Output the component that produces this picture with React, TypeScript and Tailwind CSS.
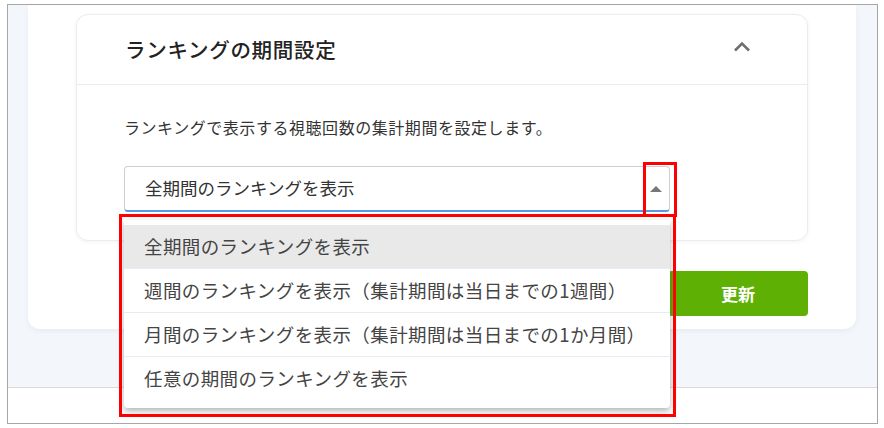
const options = [
  "全期間のランキングを表示",
  "週間のランキングを表示（集計期間は当日までの1週間）",
  "月間のランキングを表示（集計期間は当日までの1か月間）",
  "任意の期間のランキングを表示",
]

const App = () => {
  return (
    <div
      lang="ja"
      className="relative w-[884px] h-[428px] bg-white pt-[4px] pl-[7px] [text-spacing-trim:space-all]"
      style={{ fontFamily: '"Noto Sans CJK JP", "Noto Sans", sans-serif' }}
    >
      {/* FRAME */}
      <div className="w-[871px] h-[420px] border border-[#a6a6a6] bg-[#f3f6fa] flex flex-col">
        {/* MAIN */}
        <div className="h-[382px] pl-[20px] pr-[21px]">
          <div className="h-[324px] bg-white rounded-b-[12px] shadow-[0_2px_6px_rgba(0,0,0,0.05)] pt-[9px] px-[48px]">
            {/* CARD */}
            <div className="h-[227px] border border-[#ececec] rounded-[12px] shadow-[0_1px_4px_rgba(0,0,0,0.05)] bg-white flex flex-col">
              <div className="h-[70px] border-b border-[#ebebeb] flex items-center justify-between pl-[48px] pr-[56px]">
                <h2 className="text-[20.5px] font-medium text-[#222] tracking-[0.7px]">ランキングの期間設定</h2>
                <svg width="18" height="11" viewBox="0 0 18 11" className="mb-[6px]">
                  <path d="M2 9.5 L9 2.5 L16 9.5" fill="none" stroke="#6f6f6f" strokeWidth="2.6" />
                </svg>
              </div>
              <div className="px-[47px] pt-[30px]">
                <p className="text-[16px] leading-[24px] text-[#333] tracking-[0.55px]">
                  ランキングで表示する視聴回数の集計期間を設定します。
                </p>
                {/* SELECT */}
                <div className="relative mt-[27px] w-[546px]">
                  <div className="h-[46px] border border-[#cfcfcf] border-b-2 border-b-[#5b95e8] rounded-[4px] flex items-center justify-between pl-[20px] pr-[7px]">
                    <span className="text-[17.5px] text-[#333]">全期間のランキングを表示</span>
                    <svg width="12" height="6" viewBox="0 0 12 6">
                      <path d="M0 6 L6 0 L12 6 Z" fill="#777" />
                    </svg>
                  </div>
                  {/* DROPDOWN */}
                  <div className="absolute left-0 top-[54px] w-[546px] z-10 bg-white rounded-b-[4px] shadow-[0_3px_6px_rgba(0,0,0,0.3)] pt-[5px] pb-[7px]">
                    {options.map((o, i) => (
                      <div
                        key={o}
                        className={
                          i === 0
                            ? "h-[44px] bg-[#e9e9e9] border-b border-[#e6ecf5] flex items-center pl-[20px] text-[18.5px] tracking-[0.4px] text-[#444]"
                            : i === options.length - 1
                            ? "h-[44px] flex items-center pl-[20px] text-[18.5px] tracking-[0.4px] text-[#444]"
                            : "h-[44px] border-b border-[#e6ecf5] flex items-center pl-[20px] text-[18.5px] tracking-[0.4px] text-[#444]"
                        }
                      >
                        {o}
                      </div>
                    ))}
                  </div>
                </div>
              </div>
            </div>
            {/* BUTTON ROW */}
            <div className="mt-[30px] flex justify-end">
              <button className="h-[45px] w-[140px] rounded-[4px] bg-[#5fb005] text-white text-[17px] font-bold">
                更新
              </button>
            </div>
          </div>
        </div>
        {/* FOOTER */}
        <div className="flex-1 border-t border-[#dadada] bg-white"></div>
      </div>

      {/* ANNOTATIONS */}
      <div className="absolute left-[643px] top-[162px] w-[34px] h-[55px] border-[3px] border-[#ff0000] z-20"></div>
      <div className="absolute left-[119px] top-[214px] w-[557px] h-[203px] border-[3px] border-[#ff0000] z-20"></div>
    </div>
  )
}

export default App
